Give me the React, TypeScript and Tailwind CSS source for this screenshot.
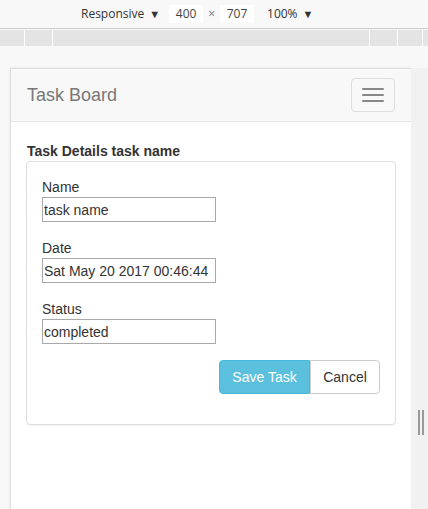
import React from 'react';

const ui = { fontFamily: '"Open Sans", "Noto Sans", sans-serif' };
const bs = { fontFamily: '"Liberation Sans", Arial, sans-serif' };

function Field({ label, value }: { label: string; value: string }) {
  return (
    <div className="flex flex-col">
      <label className="h-[20px] text-[14px] leading-[20px] text-[#333]">{label}</label>
      <input
        readOnly
        value={value}
        className="h-[25px] w-[174px] border border-[#a9a9a9] bg-white px-[1px] text-[14px] text-[#333] outline-none"
        style={bs}
      />
    </div>
  );
}

export default function App() {
  return (
    <div className="flex h-[509px] w-[428px] flex-col overflow-hidden bg-[#f8f8f8]">
      {/* devtools toolbar */}
      <div className="flex h-[29px] items-center border-b border-[#cdcdcd] bg-[#f8f8f8] pl-[81px] text-[12px] text-[#333]" style={ui}>
        <span>Responsive</span>
        <span className="ml-[5px] text-[11px]">▼</span>
        <span className="ml-[9px] flex h-[18px] w-[34px] items-center justify-center bg-white text-[#444]">400</span>
        <span className="mx-[5px] text-[12px] text-[#777]">×</span>
        <span className="flex h-[18px] w-[34px] items-center justify-center bg-white text-[#444]">707</span>
        <span className="ml-[13px]">100%</span>
        <span className="ml-[5px] text-[11px]">▼</span>
      </div>
      <div className="mt-[1px] flex h-[16px] bg-[#e4e4e4]">
        <div className="w-[24px]" />
        <div className="w-[1px] bg-white" />
        <div className="w-[27px]" />
        <div className="w-[1px] bg-white" />
        <div className="flex-1" />
        <div className="w-[1px] bg-white" />
        <div className="w-[27px]" />
        <div className="w-[1px] bg-white" />
        <div className="w-[24px]" />
        <div className="w-[1px] bg-white" />
        <div className="w-[5px]" />
      </div>

      <div className="mt-[22px] flex flex-1">
        <div className="w-[10px]" />
        {/* device viewport */}
        <div className="w-[401px] border-l border-t border-[#dedede] bg-white shadow-[0_0_3px_rgba(0,0,0,0.08)]" style={bs}>
          <div className="flex h-[53px] items-center border-b border-[#e7e7e7] bg-[#f8f8f8]">
            <span className="ml-[16px] text-[18px] text-[#777]">Task Board</span>
            <div className="ml-auto mr-[16px] flex h-[34px] w-[44px] flex-col items-center justify-center gap-[4px] rounded-[4px] border border-[#ddd]">
              <span className="h-[2px] w-[22px] rounded-[1px] bg-[#888]" />
              <span className="h-[2px] w-[22px] rounded-[1px] bg-[#888]" />
              <span className="h-[2px] w-[22px] rounded-[1px] bg-[#888]" />
            </div>
          </div>

          <div className="px-[15px]">
            <div className="mt-[19px] h-[20px] pl-[1px] text-[14px] font-bold leading-[20px] text-[#333]">Task Details task name</div>
            <div className="rounded-[4px] border border-[#ddd] px-[15px] pb-[30px] pt-[15px] shadow-[0_1px_1px_rgba(0,0,0,0.05)]">
              <div className="flex flex-col gap-[16px]">
                <Field label="Name" value="task name" />
                <Field label="Date" value="Sat May 20 2017 00:46:44" />
                <Field label="Status" value="completed" />
              </div>
              <div className="mt-[16px] flex justify-end">
                <button className="h-[34px] w-[91px] rounded-l-[4px] border border-[#46b8da] bg-[#5bc0de] text-[14px] text-white">Save Task</button>
                <button className="h-[34px] w-[70px] rounded-r-[4px] border border-[#ccc] bg-white text-[14px] text-[#333]">Cancel</button>
              </div>
            </div>
          </div>
        </div>
        {/* scroll gutter */}
        <div className="flex flex-1 flex-col bg-[#f1f1f1] pl-[7px]">
          <div className="mt-[342px] flex h-[25px] gap-[2px]">
            <span className="w-[2px] bg-[#9a9a9a]" />
            <span className="w-[2px] bg-[#9a9a9a]" />
          </div>
        </div>
      </div>
    </div>
  );
}
